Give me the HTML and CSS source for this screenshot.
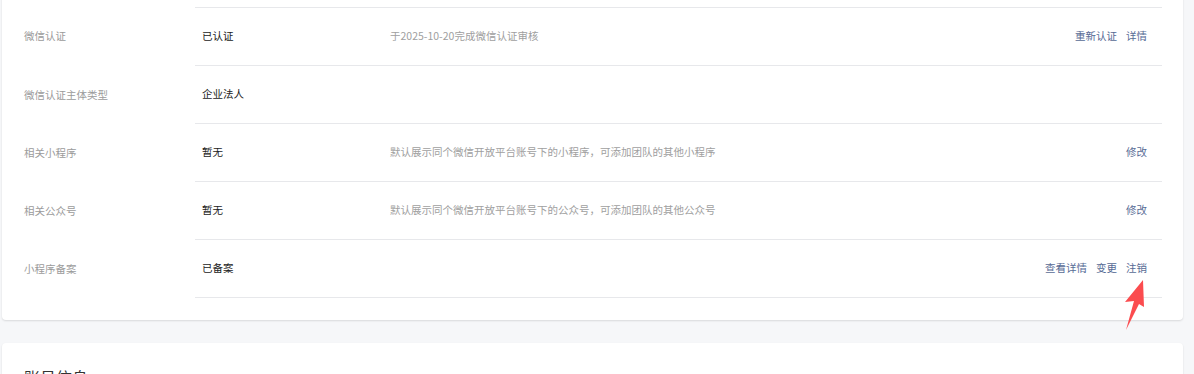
FILE: index.html
```html
<!DOCTYPE html>
<html lang="zh-CN">
<head>
<meta charset="utf-8">
<title>设置</title>
<link rel="stylesheet" href="styles.css">
</head>
<body>
<div class="page">
  <section class="card card-top">
    <div class="row row-first">
      <div class="label">微信认证</div>
      <div class="content first">
        <div class="value">已认证</div>
        <div class="desc">于2025-10-20完成微信认证审核</div>
        <div class="actions"><a>重新认证</a><a>详情</a></div>
      </div>
    </div>
    <div class="row">
      <div class="label">微信认证主体类型</div>
      <div class="content">
        <div class="value">企业法人</div>
        <div class="desc"></div>
        <div class="actions"></div>
      </div>
    </div>
    <div class="row">
      <div class="label">相关小程序</div>
      <div class="content">
        <div class="value">暂无</div>
        <div class="desc">默认展示同个微信开放平台账号下的小程序，可添加团队的其他小程序</div>
        <div class="actions"><a>修改</a></div>
      </div>
    </div>
    <div class="row">
      <div class="label">相关公众号</div>
      <div class="content">
        <div class="value">暂无</div>
        <div class="desc">默认展示同个微信开放平台账号下的公众号，可添加团队的其他公众号</div>
        <div class="actions"><a>修改</a></div>
      </div>
    </div>
    <div class="row">
      <div class="label">小程序备案</div>
      <div class="content">
        <div class="value">已备案</div>
        <div class="desc"></div>
        <div class="actions"><a>查看详情</a><a>变更</a><a class="target">注销<svg class="arrow" width="30" height="56" viewBox="0 0 30 56"><polygon points="19,0 20,27 15,24 2,50 10,21 1,22" fill="#fb4c4f"/></svg></a></div>
      </div>
    </div>
  </section>
  <section class="card card-bottom">
    <h2 class="title">账号信息</h2>
  </section>
</div>
</body>
</html>
```
FILE: styles.css
```css
html, body {
  margin: 0;
  padding: 0;
}
body {
  background: #f6f7f9;
  font-family: "Noto Sans CJK SC", "Noto Sans", "Liberation Sans", sans-serif;
  font-size: 10.5px;
  color: #333;
  overflow: hidden;
  height: 374px;
}
.page {
  padding: 0 11px 0 2px;
}
.card {
  background: #fff;
  border-radius: 4px;
  box-shadow: 0 1px 2px rgba(0, 0, 0, 0.12);
}
.card-top {
  margin-top: -10px;
  padding: 17px 21px 22px 22px;
}
.row {
  display: flex;
  height: 58px;
}
.row-first {
  height: 59px;
}
.label {
  width: 171px;
  flex: none;
  display: flex;
  align-items: center;
  padding-bottom: 2px;
  color: #9b9b9b;
}
.content {
  flex: 1;
  display: flex;
  align-items: center;
  border-bottom: 1px solid #e7e8eb;
  padding: 0 15px 2px 7px;
}
.content.first {
  border-top: 1px solid #e7e8eb;
}
.value {
  width: 188px;
  flex: none;
  color: #222;
}
.desc {
  flex: 1;
  color: #a0a0a0;
}
.actions {
  display: flex;
  gap: 9px;
  color: #576b95;
}
.actions a {
  cursor: pointer;
}
.target {
  position: relative;
}
.arrow {
  position: absolute;
  left: -2px;
  top: 20px;
}
.card-bottom {
  margin-top: 23px;
  padding: 22px 22px;
  height: 60px;
}
.title {
  margin: 0;
  font-size: 16px;
  font-weight: 400;
  color: #333;
}
```
